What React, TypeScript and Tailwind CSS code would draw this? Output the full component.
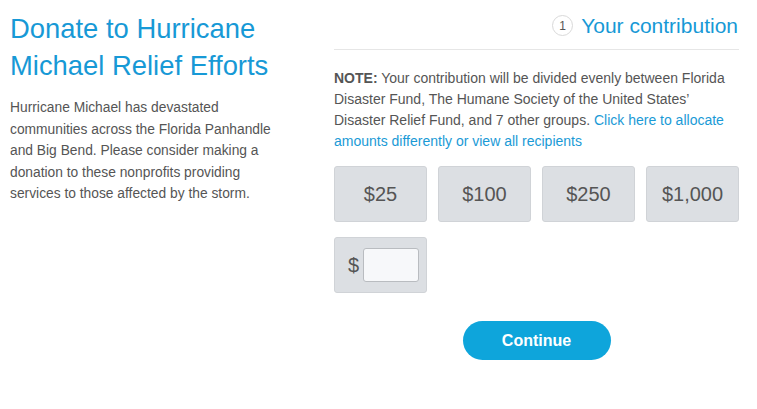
import React from "react";

export default function App() {
  const amounts = ["$25", "$100", "$250", "$1,000"];
  return (
    <div
      className="w-[757px] h-[409px] bg-white flex overflow-hidden"
      style={{ fontFamily: '"Liberation Sans", Arial, sans-serif' }}
    >
      <div className="w-[324px] pl-[10px] pt-[10px]">
        <h1 className="text-[27.4px] leading-[37px] text-[#1799d6] font-normal">
          Donate to Hurricane
          <br />
          Michael Relief Efforts
        </h1>
        <p className="mt-[13px] text-[13.8px] leading-[21.5px] text-[#555555] w-[278px]">
          Hurricane Michael has devastated communities across the Florida Panhandle and Big Bend. Please consider making a
          donation to these nonprofits providing services to those affected by the storm.
        </p>
      </div>
      <div className="w-[405px] ml-[10px] flex flex-col">
        <div className="flex items-center justify-end gap-[8px] h-[50px] pt-[2px] border-b border-[#e6e6e6]">
          <div className="w-[21px] h-[21px] rounded-full border border-[#d9d9d9] flex items-center justify-center text-[12px] text-[#555555]">
            1
          </div>
          <div className="text-[21px] text-[#1799d6] leading-[24px] mr-[1px]">Your contribution</div>
        </div>
        <p className="mt-[18px] text-[14px] leading-[21px] text-[#555555]">
          <span className="font-bold">NOTE:</span> Your contribution will be divided evenly between Florida Disaster
          Fund, The Humane Society of the United States’ Disaster Relief Fund, and 7 other groups.{" "}
          <span className="text-[#1a9ad6]">Click here to allocate amounts differently or view all recipients</span>
        </p>
        <div className="mt-[14px] grid grid-cols-4 gap-x-[11px] gap-y-[15px]">
          {amounts.map((a) => (
            <div
              key={a}
              className="h-[56px] rounded-[3px] bg-[#dcdfe3] border border-[#d0d3d7] flex items-center justify-center text-[20px] text-[#555555]"
            >
              {a}
            </div>
          ))}
          <div className="h-[56px] rounded-[3px] bg-[#dcdfe3] border border-[#d0d3d7] flex items-center pl-[13px] gap-[4px] text-[20px] text-[#555555]">
            <span>$</span>
            <div className="w-[56px] h-[34px] rounded-[3px] bg-[#f7f8fa] border border-[#b9bcc0]" />
          </div>
        </div>
        <div className="mt-[28px] flex justify-center">
          <button className="w-[148px] h-[39px] rounded-full bg-[#0ea5db] text-white font-bold text-[16px]">
            Continue
          </button>
        </div>
      </div>
    </div>
  );
}
